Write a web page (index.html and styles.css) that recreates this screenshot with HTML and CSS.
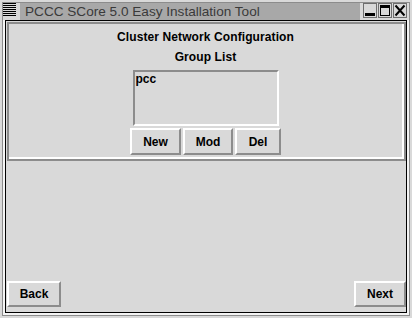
FILE: index.html
```html
<!DOCTYPE html>
<html lang="en">
<head>
    <meta charset="UTF-8">
    <title>PCCC SCore 5.0 Easy Installation Tool</title>
    <link rel="stylesheet" href="styles.css">
</head>
<body>
    <div class="window">
        <div class="frame">
            <div class="titlebar">
                <div class="menu-btn"></div>
                <div class="title">PCCC SCore 5.0 Easy Installation Tool</div>
                <div class="win-btns">
                    <div class="win-btn">
                        <svg width="12" height="13" viewBox="0 0 12 13"><rect x="1" y="9" width="10" height="3" fill="#000"/></svg>
                    </div>
                    <div class="win-btn">
                        <svg width="12" height="13" viewBox="0 0 12 13"><rect x="1.5" y="1.5" width="9" height="10" fill="none" stroke="#000"/><rect x="1" y="1" width="10" height="3" fill="#000"/></svg>
                    </div>
                    <div class="win-btn">
                        <svg width="12" height="13" viewBox="0 0 12 13"><path d="M1.5 1.5 L10.5 11.5 M10.5 1.5 L1.5 11.5" stroke="#000" stroke-width="2" fill="none"/></svg>
                    </div>
                </div>
            </div>
            <div class="client-wrap">
                <div class="client">
                    <div class="panel">
                        <div class="heading">Cluster Network Configuration</div>
                        <div class="heading">Group List</div>
                        <div class="listbox">
                            <div class="item">pcc</div>
                        </div>
                        <div class="btn-row">
                            <button class="btn btn-new">New</button>
                            <button class="btn btn-mod">Mod</button>
                            <button class="btn btn-del">Del</button>
                        </div>
                    </div>
                    <div class="nav-row">
                        <button class="btn btn-back">Back</button>
                        <button class="btn btn-next">Next</button>
                    </div>
                </div>
            </div>
        </div>
    </div>
</body>
</html>
```

FILE: styles.css
```css
body { margin: 0; background: #d9d9d9; font-family: "Liberation Sans", Arial, sans-serif; }
.window { width: 412px; height: 318px; box-sizing: border-box; padding: 2px; background: #d9d9d9; }
.frame { height: 100%; box-sizing: border-box; border: 1px solid #8c8c8c; display: flex; flex-direction: column; }
.titlebar { height: 17px; display: flex; align-items: flex-start; background: #d9d9d9; }
.menu-btn { width: 13px; height: 14px; background: repeating-linear-gradient(#000 0 1px, #d9d9d9 1px 2px); }
.title { flex: 1; height: 17px; margin-left: 4px; padding-left: 5px; background: #a8a8a8; color: #3a3a3a; font-size: 13.6px; line-height: 17px; white-space: nowrap; overflow: hidden; }
.win-btns { display: flex; gap: 1px; margin-left: 3px; margin-right: 2px; }
.win-btn { width: 12px; height: 13px; border: 1px solid #6e6e6e; background: #d9d9d9; display: flex; align-items: center; justify-content: center; }
.client-wrap { flex: 1; background: #f4f4f4; padding: 0 2px 2px 2px; display: flex; }
.client { flex: 1; border: 1px solid #000; background: #d9d9d9; display: flex; flex-direction: column; }
.panel { margin: 1px 0 0 1px; border: 2px solid #8c8c8c; box-shadow: inset -2px -2px 0 #fff; padding: 3px 2px 4px 0; display: flex; flex-direction: column; align-items: center; }
.heading { font-size: 12px; font-weight: bold; line-height: 20px; color: #000; letter-spacing: 0.1px; }
.listbox { width: 142px; height: 52px; margin-top: 3px; border: 2px solid; border-color: #8c8c8c #fff #fff #8c8c8c; }
.item { font-size: 12px; font-weight: bold; line-height: 14px; padding-left: 1px; }
.btn-row { display: flex; gap: 2px; margin-top: 2px; }
.btn { height: 27px; box-sizing: border-box; border: 2px solid; border-color: #fff #8c8c8c #8c8c8c #fff; background: #d9d9d9; font-family: "Liberation Sans", Arial, sans-serif; font-size: 12px; font-weight: bold; color: #000; padding: 0; }
.btn-new { width: 51px; }
.btn-mod { width: 50px; }
.btn-del { width: 46px; }
.nav-row { margin-top: auto; display: flex; justify-content: space-between; padding: 0 0 5px 1px; }
.btn-back { width: 54px; height: 26px; }
.btn-next { width: 52px; height: 26px; }
```
